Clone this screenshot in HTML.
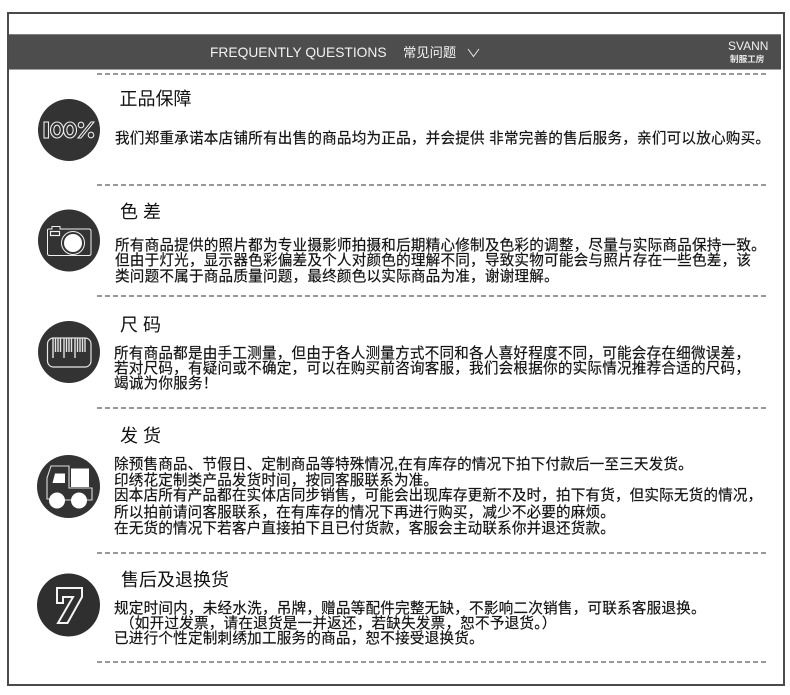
<!DOCTYPE html>
<html><head><meta charset="utf-8">
<style>
html,body{margin:0;padding:0;background:#fff}
body{width:790px;height:695px;position:relative;overflow:hidden;font-family:"Liberation Sans","Noto Sans CJK SC",sans-serif;color:#222}
.abs{position:absolute}
.l{position:absolute;white-space:nowrap;font-size:14.6px;letter-spacing:.2px;line-height:16px;height:16px;color:#111;-webkit-text-stroke:.2px #222;font-family:"Liberation Sans","Noto Sans CJK SC",sans-serif}
.s{letter-spacing:.14px}
.t{position:absolute;white-space:nowrap;font-size:18px;line-height:22px;color:#111;font-family:"Liberation Sans","Noto Sans CJK SC",sans-serif}
.d{position:absolute;left:97px;width:672px;height:1.5px;background:repeating-linear-gradient(90deg,#999 0,#999 5px,transparent 5px,transparent 8px)}
</style></head><body>
<div class="abs" style="left:7px;top:12px;width:774px;height:670px;border:2px solid #4a4a4a;box-sizing:content-box"></div>
<div class="abs" style="left:9px;top:34px;width:772px;height:36px;background:#4d4d4d;border-top:1px solid #808080;border-bottom:1px solid #a0a0a0;box-sizing:border-box"></div>
<div class="abs" style="left:210px;top:44px;font-size:13.8px;line-height:18px;color:#f2f2f2;white-space:nowrap">FREQUENTLY QUESTIONS</div>
<div class="abs" style="left:403px;top:44px;font-size:13.3px;line-height:18px;color:#f2f2f2;white-space:nowrap">常见问题</div>
<svg class="abs" style="left:467px;top:48px" width="13" height="10" viewBox="0 0 13 10"><path d="M1 1 L6.5 8.5 L12 1" fill="none" stroke="#e8e8e8" stroke-width="1"/></svg>
<div class="abs" style="left:728px;top:39px;font-size:12px;line-height:14px;color:#f0f0f0;white-space:nowrap">SVANN</div>
<div class="abs" style="left:730px;top:53px;font-size:8.6px;line-height:12px;color:#e8e8e8;font-weight:bold;white-space:nowrap">制服工房</div>

<div class="d" style="top:73px"></div>
<div class="d" style="top:184px"></div>
<div class="d" style="top:295px"></div>
<div class="d" style="top:407px"></div>
<div class="d" style="top:552px"></div>
<div class="d" style="top:661px"></div>

<div class="t" style="left:119.500px;top:88px">正品保障</div>
<div class="l" style="left:115px;top:131px">我们郑重承诺本店铺所有出售的商品均为正品，并会提供 非常完善的售后服务，亲们可以放心购买。</div>

<div class="t" style="left:120px;top:201px">色 差</div>
<div class="l" style="left:115px;top:238px">所有商品提供的照片都为专业摄影师拍摄和后期精心修制及色彩的调整，尽量与实际商品保持一致。</div>
<div class="l" style="left:115px;top:253px">但由于灯光，显示器色彩偏差及个人对颜色的理解不同，导致实物可能会与照片存在一些色差，该</div>
<div class="l" style="left:115px;top:269px">类问题不属于商品质量问题，最终颜色以实际商品为准，谢谢理解。</div>

<div class="t" style="left:120px;top:314px">尺 码</div>
<div class="l" style="left:114px;top:346px">所有商品都是由手工测量，但由于各人测量方式不同和各人喜好程度不同，可能会存在细微误差，</div>
<div class="l" style="left:114px;top:361px">若对尺码，有疑问或不确定，可以在购买前咨询客服，我们会根据你的实际情况推荐合适的尺码，</div>
<div class="l" style="left:114px;top:376px">竭诚为你服务！</div>

<div class="t" style="left:120px;top:425px">发 货</div>
<div class="l s" style="left:114px;top:457px">除预售商品、节假日、定制商品等特殊情况,在有库存的情况下拍下付款后一至三天发货。</div>
<div class="l s" style="left:114px;top:472.500px">印绣花定制类产品发货时间，按同客服联系为准。</div>
<div class="l s" style="left:114px;top:488px">因本店所有产品都在实体店同步销售，可能会出现库存更新不及时，拍下有货，但实际无货的情况，</div>
<div class="l s" style="left:114px;top:504.500px">所以拍前请问客服联系，在有库存的情况下再进行购买，减少不必要的麻烦。</div>
<div class="l s" style="left:114px;top:521px">在无货的情况下若客户直接拍下且已付货款，客服会主动联系你并退还货款。</div>

<div class="t" style="left:121px;top:569px">售后及退换货</div>
<div class="l" style="left:114px;top:601px">规定时间内，未经水洗，吊牌，赠品等配件完整无缺，不影响二次销售，可联系客服退换。</div>
<div class="l" style="left:120px;top:616px">（如开过发票，请在退货是一并返还，若缺失发票，恕不予退货。）</div>
<div class="l" style="left:114px;top:631px">已进行个性定制刺绣加工服务的商品，恕不接受退换货。</div>

<svg class="abs" style="left:0;top:0" width="110" height="695" viewBox="0 0 110 695">
<!-- 100% -->
<circle cx="69" cy="130" r="31" fill="#333"/>
<g fill="none" stroke="#ececec" stroke-width="1.100">
<rect x="44" y="122" width="4.500" height="16"/>
<ellipse cx="57" cy="130" rx="6.500" ry="8"/><ellipse cx="57" cy="130" rx="3.200" ry="4.800"/>
<ellipse cx="70" cy="130" rx="6.500" ry="8"/><ellipse cx="70" cy="130" rx="3.200" ry="4.800"/>
<circle cx="81" cy="125" r="2.800"/><circle cx="91" cy="135" r="2.800"/>
<path d="M78 138 L91 122 L94 122 L81 138 Z"/>
</g>
<!-- camera -->
<circle cx="69" cy="240.500" r="31" fill="#333"/>
<path d="M48.500 229 H52 V226.500 H60 V229 H89 Q91 229 91 231 V253.500 Q91 255.500 89 255.500 H49.500 Q47.500 255.500 47.500 253.500 V230 Q47.500 229 48.500 229Z" fill="none" stroke="#f0f0f0" stroke-width="1"/>
<rect x="50.500" y="231.500" width="9" height="4" fill="none" stroke="#f0f0f0" stroke-width="1.200"/>
<circle cx="73" cy="243" r="11.500" fill="none" stroke="#f0f0f0" stroke-width="1"/>
<circle cx="73" cy="243" r="9" fill="#fff"/>
<!-- ruler -->
<circle cx="69" cy="352" r="31" fill="#333"/>
<rect x="47.500" y="338" width="43.500" height="29" rx="6" fill="none" stroke="#e6e6e6" stroke-width="1.200"/>
<g stroke="#e4e4e4" stroke-width="1.400">
<path d="M53 338V358M55.500 338V352M58 338V352M60.500 338V352M64 338V358M66.500 338V352M69 338V352M71.500 338V352M75 338V358M77.500 338V352M80 338V352M82.500 338V352M85 338V352"/>
</g>
<!-- truck -->
<circle cx="68.500" cy="486.500" r="31.500" fill="#333"/>
<path d="M50 499 H47 V478 L51 466 H69 V488 H92 V500 H87 M64 500 H72" fill="none" stroke="#dcdcdc" stroke-width="1.100"/>
<path d="M55 473.500 H65 V483 H52.500 Z" fill="#fff"/>
<rect x="71" y="468.500" width="18" height="18.500" fill="#fff"/>
<circle cx="57" cy="500.500" r="8" fill="#fff"/>
<circle cx="79" cy="500.500" r="8" fill="#fff"/>
<!-- seven -->
<circle cx="68.500" cy="605" r="31.500" fill="#2f2f2f"/>
<path d="M57 588 H82 V597 L67.500 623 H58 L73 597 H63 V603 H57 Z" fill="none" stroke="#f4f4f4" stroke-width="2"/>
</svg>
</body></html>
